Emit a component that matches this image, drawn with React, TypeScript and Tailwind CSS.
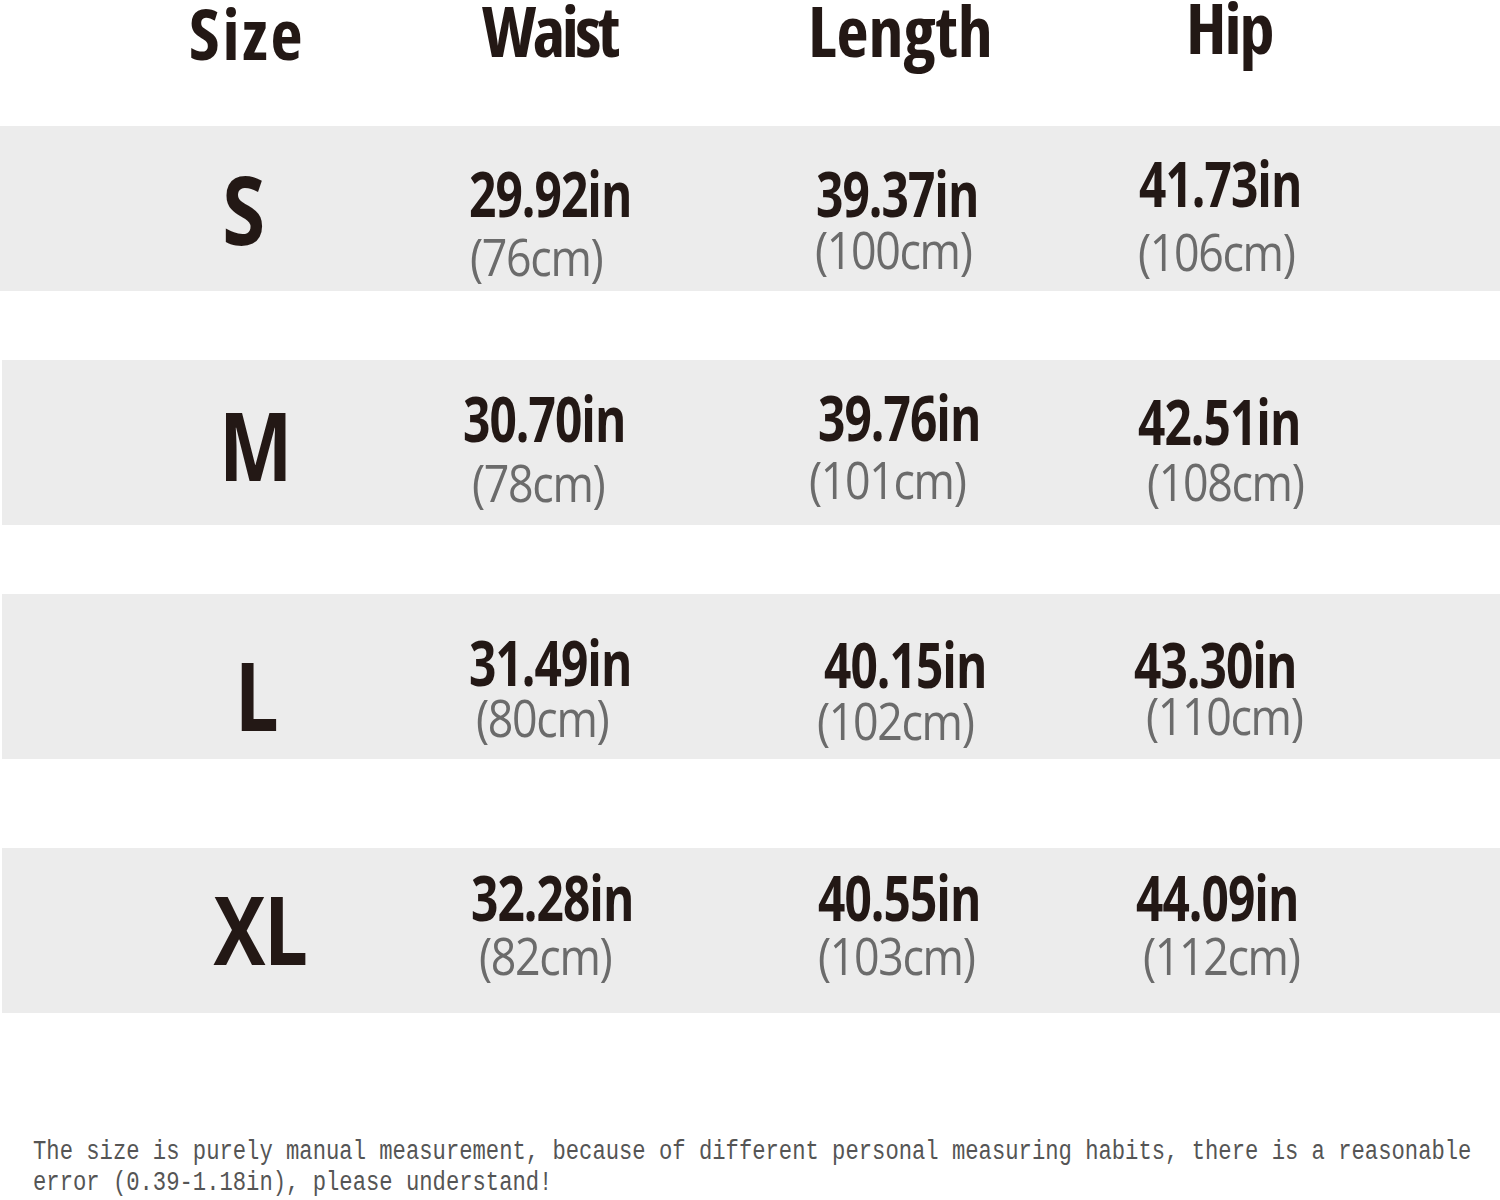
type Cell = {
  inch: string;
  cm: string;
  inCls: string;
  cmCls: string;
};

type Row = {
  size: string;
  sizeCls: string;
  rowCls: string;
  cells: Cell[];
};

const sans = "font-['Open_Sans','Noto_Sans','Liberation_Sans',sans-serif]";

const headers = [
  { label: "Size", cls: "w-[482px] pl-[189px] -mt-[6px] font-stretch-[75%] tracking-[0.04em]" },
  { label: "Waist", cls: "w-[328px] -mt-[9px] font-stretch-[75%] tracking-[-0.05em]" },
  { label: "Length", cls: "w-[378px] -ml-[2px] -mt-[9px] font-stretch-[80%]" },
  { label: "Hip", cls: "flex-1 -mt-[12px] font-stretch-[75%] tracking-[-0.03em]" },
];

const colWidths = ["w-[348px]", "w-[319px]", "flex-1"];

const rows: Row[] = [
  {
    size: "S",
    sizeCls: "mt-[35px] -ml-[12px]",
    rowCls: "",
    cells: [
      { inch: "29.92in", cm: "(76cm)", inCls: "mt-[35px] ml-[1px]", cmCls: "mt-[6px] ml-[2px]" },
      { inch: "39.37in", cm: "(100cm)", inCls: "mt-[35px]", cmCls: "-mt-[1px] -ml-[1px]" },
      { inch: "41.73in", cm: "(106cm)", inCls: "mt-[25px] ml-[4px]", cmCls: "mt-[11px] ml-[3px]" },
    ],
  },
  {
    size: "M",
    sizeCls: "mt-[37px] -ml-[2px]",
    rowCls: "mt-[69px] ml-[2px]",
    cells: [
      { inch: "30.70in", cm: "(78cm)", inCls: "mt-[26px] -ml-[7px]", cmCls: "mt-[7px] ml-[2px]" },
      { inch: "39.76in", cm: "(101cm)", inCls: "mt-[25px]", cmCls: "mt-[5px] -ml-[9px]" },
      { inch: "42.51in", cm: "(108cm)", inCls: "mt-[29px] ml-[1px]", cmCls: "mt-[3px] ml-[10px]" },
    ],
  },
  {
    size: "L",
    sizeCls: "mt-[53px] -ml-[1px]",
    rowCls: "mt-[69px] ml-[2px]",
    cells: [
      { inch: "31.49in", cm: "(80cm)", inCls: "mt-[36px] -ml-[1px]", cmCls: "-mt-[2px] ml-[6px]" },
      { inch: "40.15in", cm: "(102cm)", inCls: "mt-[38px] ml-[6px]", cmCls: "-mt-[1px] -ml-[1px]" },
      { inch: "43.30in", cm: "(110cm)", inCls: "mt-[38px] -ml-[3px]", cmCls: "-mt-[6px] ml-[9px]" },
    ],
  },
  {
    size: "XL",
    sizeCls: "mt-[33px] ml-[3px]",
    rowCls: "mt-[89px] ml-[2px]",
    cells: [
      { inch: "32.28in", cm: "(82cm)", inCls: "mt-[17px] ml-[1px]", cmCls: "mt-[1px] ml-[9px]" },
      { inch: "40.55in", cm: "(103cm)", inCls: "mt-[17px]", cmCls: "mt-[1px]" },
      { inch: "44.09in", cm: "(112cm)", inCls: "mt-[17px] -ml-[1px]", cmCls: "mt-[1px] ml-[6px]" },
    ],
  },
];

function SizeRow({ row }: { row: Row }) {
  return (
    <div className={`flex h-[165px] bg-[#ececec] ${row.rowCls}`}>
      <div className="w-[468px] shrink-0 pl-[195px]">
        <div
          className={`w-[120px] origin-center scale-x-[0.82] text-center text-[95px] font-bold leading-none tracking-[-0.02em] text-[#231815] ${row.sizeCls}`}
        >
          {row.size}
        </div>
      </div>
      {row.cells.map((cell, i) => (
        <div key={i} className={`flex shrink-0 flex-col items-start ${colWidths[i]}`}>
          <div
            className={`origin-left scale-x-[0.76] whitespace-nowrap text-[63px] font-bold leading-none tracking-[-0.02em] text-[#231815] ${cell.inCls}`}
          >
            {cell.inch}
          </div>
          <div
            className={`origin-left scale-x-[0.86] whitespace-nowrap text-[52px] font-medium leading-none tracking-[-0.03em] text-[#6b6b6b] ${cell.cmCls}`}
          >
            {cell.cm}
          </div>
        </div>
      ))}
    </div>
  );
}

export default function App() {
  return (
    <div className={`h-[1200px] w-[1500px] overflow-hidden bg-white ${sans}`}>
      <div className="flex h-[126px] items-start pt-[4px]">
        {headers.map((h) => (
          <div
            key={h.label}
            className={`shrink-0 text-[70px] font-bold leading-none text-[#231815] ${h.cls}`}
          >
            {h.label}
          </div>
        ))}
      </div>

      {rows.map((row) => (
        <SizeRow key={row.size} row={row} />
      ))}

      <div className="mt-[124px] pl-[33px] font-['Liberation_Mono','DejaVu_Sans_Mono',monospace] text-[27px] leading-[31px] text-[#555555]">
        <div className="origin-left scale-x-[0.822] whitespace-nowrap">
          The size is purely manual measurement, because of different personal measuring habits, there is a reasonable
        </div>
        <div className="origin-left scale-x-[0.822] whitespace-nowrap">
          error (0.39-1.18in), please understand!
        </div>
      </div>
    </div>
  );
}
